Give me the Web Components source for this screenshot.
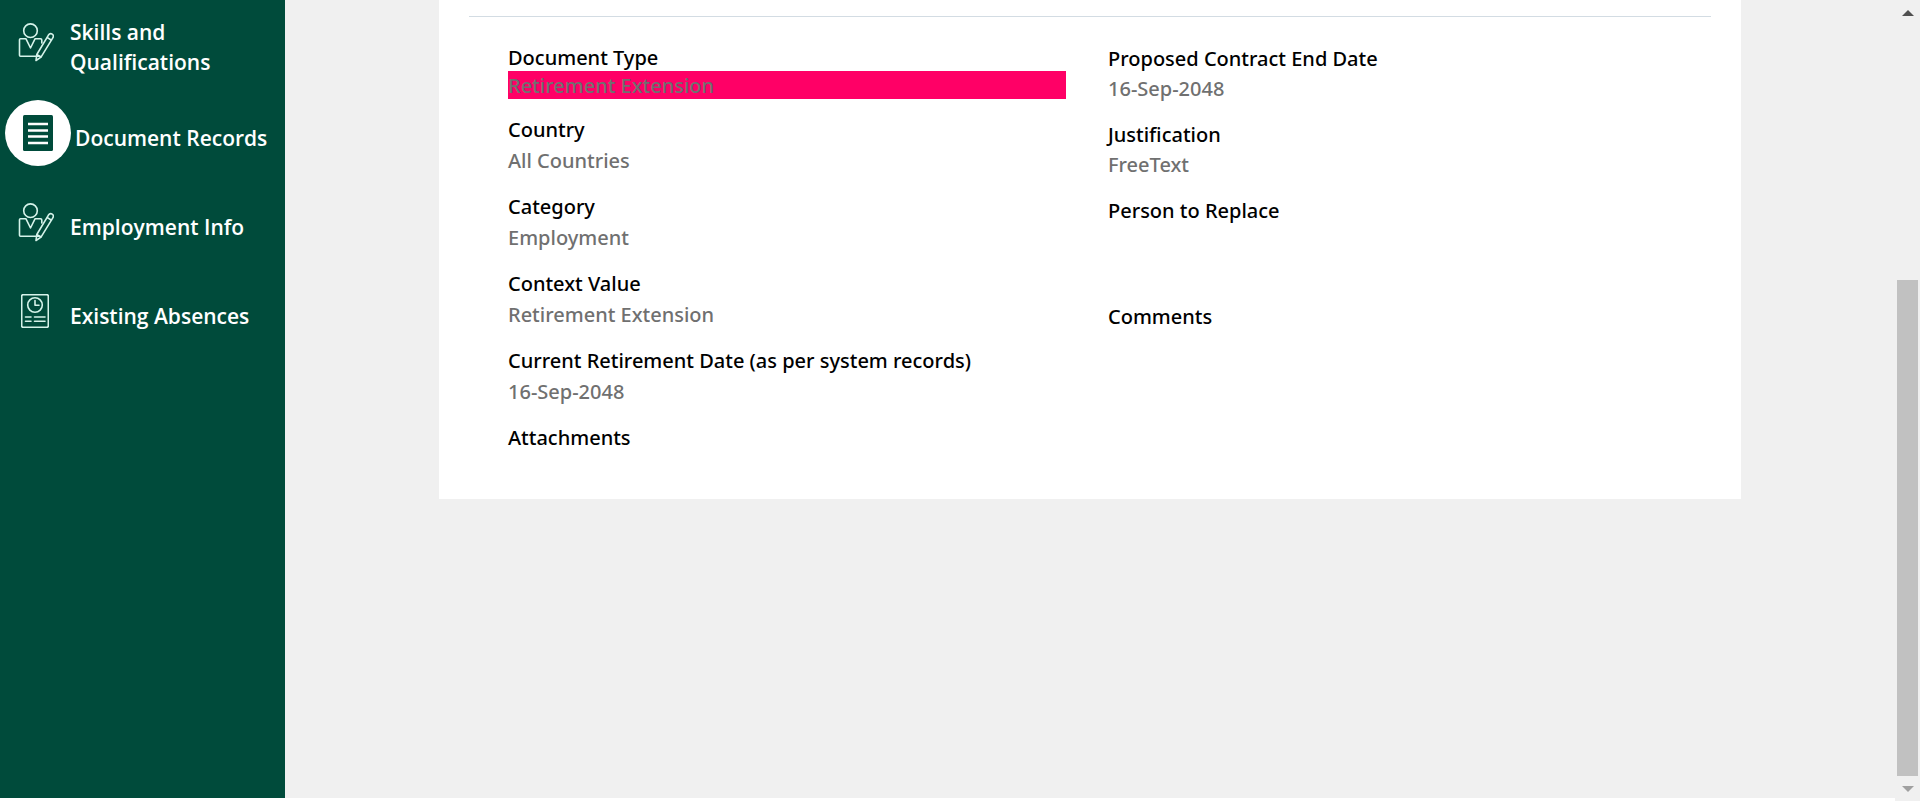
<!DOCTYPE html>
<html lang="en">
<head>
<meta charset="utf-8">
<title>Document Records</title>
<style>
html, body { margin: 0; height: 100%; background: #fff; }
body { font-family: "Noto Sans", "Open Sans", sans-serif; overflow: hidden; }
</style>
</head>
<body>
<hr-app></hr-app>

<template id="t-hr-app">
  <style>
    :host { display: flex; height: 100vh; }
    .page { flex: 1; display: flex; min-width: 0; margin-bottom: 3px; background: #f0f0f0; }
    main { flex: 1; min-width: 0; }
  </style>
  <div class="page">
    <side-nav>
      <nav-item icon="person">Skills and Qualifications</nav-item>
      <nav-item icon="document" active>Document Records</nav-item>
      <nav-item icon="person">Employment Info</nav-item>
      <nav-item icon="absence">Existing Absences</nav-item>
    </side-nav>
    <main>
      <record-card>
        <info-field slot="left" label="Document Type" highlight>Retirement Extension</info-field>
        <info-field slot="left" label="Country">All Countries</info-field>
        <info-field slot="left" label="Category">Employment</info-field>
        <info-field slot="left" label="Context Value">Retirement Extension</info-field>
        <info-field slot="left" label="Current Retirement Date (as per system records)">16-Sep-2048</info-field>
        <info-field slot="left" label="Attachments"></info-field>
        <info-field slot="right" label="Proposed Contract End Date">16-Sep-2048</info-field>
        <info-field slot="right" label="Justification">FreeText</info-field>
        <info-field slot="right" label="Person to Replace" tall></info-field>
        <info-field slot="right" label="Comments"></info-field>
      </record-card>
    </main>
  </div>
  <scroll-rail></scroll-rail>
</template>

<template id="t-side-nav">
  <style>
    :host { display: block; flex: none; width: 285px; background: #004b3b; }
    nav { display: flex; flex-direction: column; gap: 23px; padding-top: 7px; }
  </style>
  <nav aria-label="Main"><slot></slot></nav>
</template>

<template id="t-nav-item">
  <style>
    :host { display: block; }
    a { display: flex; align-items: center; min-height: 66px; color: #fff; text-decoration: none;
        font: 600 21px/30px "Open Sans", "Noto Sans", sans-serif; }
    .icon { flex: none; display: flex; align-items: center; justify-content: center; width: 70px; height: 66px; }
    .label { padding-top: 10px; }
    :host([active]) .icon { width: 66px; margin: 0 4px 0 5px; border-radius: 50%; background: #fff; }
    svg { display: block; fill: none; stroke: #d5f3ea; stroke-width: 1.6; stroke-linejoin: round; stroke-linecap: round; }
  </style>
  <a href="#"><span class="icon"></span><span class="label"><slot></slot></span></a>
</template>

<template id="t-record-card">
  <style>
    :host { display: block; box-sizing: border-box; max-width: 1302px; margin: 0 auto; padding: 16px 30px 46px; background: #fff; }
    hr { margin: 0; border: 0; height: 1px; background: #d3dce3; }
    .columns { display: grid; grid-template-columns: 1fr 1fr; column-gap: 42px; align-items: start; padding: 28px 45px 0 39px; }
    .column { display: grid; }
    .left { row-gap: 15px; }
    .right { row-gap: 16px; --label-line: 28px; }
  </style>
  <hr>
  <div class="columns">
    <div class="column left"><slot name="left"></slot></div>
    <div class="column right"><slot name="right"></slot></div>
  </div>
</template>

<template id="t-info-field">
  <style>
    :host { display: block; font-size: 20px; font-weight: 500; }
    dl, dd { margin: 0; }
    dt { color: #000; line-height: var(--label-line, 30px); }
    dd { color: #707070; line-height: 32px; }
    :host([highlight]) { padding-bottom: 1px; }
    :host([highlight]) dt { line-height: 26px; }
    :host([highlight]) dd { padding-top: 2px; line-height: 26px; background: #ff0066; }
    :host([tall]) dd { height: 62px; }
  </style>
  <dl><dt></dt><dd><slot></slot></dd></dl>
</template>

<template id="t-scroll-rail">
  <style>
    :host { display: flex; flex-direction: column; flex: none; width: 25px; background: #f0f0f0; }
    button { display: flex; justify-content: center; align-items: center; width: 21px; height: 25px; margin-left: 2px; padding: 0; border: 0; background: none; }
    .track { flex: 1; display: flex; flex-direction: column; padding-left: 2px; }
    .track::before { content: ""; flex: 255; }
    .thumb { flex: 496; width: 21px; background: #c1c1c1; }
  </style>
  <button type="button" aria-label="Scroll up"><svg width="12" height="6"><path d="M0 6L6 0L12 6Z" fill="#505050"/></svg></button>
  <div class="track"><div class="thumb"></div></div>
  <button type="button" aria-label="Scroll down"><svg width="12" height="6"><path d="M0 0L6 6L12 0Z" fill="#a0a0a0"/></svg></button>
</template>

<script>
const ICONS = {
  person: `<svg width="37" height="39" viewBox="17 22 37 39" aria-hidden="true">
    <circle cx="30.5" cy="29.7" r="6.8"/>
    <path d="M40 55.2H20.5a1 1 0 0 1-1-1V38.8a1 1 0 0 1 1-1H26L30.5 47L35 37.8H40.5q1.3 0 1.3 1.3V42"/>
    <path d="M36 59.5L36.8 53.5L48.3 34.3Q50 31.8 52.2 33.2Q54.2 34.6 52.8 36.9L41 56.2ZM36.8 53.5L41 56.2M47 36.4L51.5 39.2"/></svg>`,
  document: `<svg width="30" height="36" viewBox="0 0 30 36" aria-hidden="true">
    <rect width="30" height="36" rx="1.5" fill="#004b3b" stroke="none"/>
    <path d="M5 9H25M5 15.5H25M5 21.5H25M5 28H25" stroke="#fff" stroke-width="2.4" stroke-linecap="butt"/></svg>`,
  absence: `<svg width="28" height="34" viewBox="22 293 28 34" aria-hidden="true">
    <rect x="22.7" y="293.7" width="26.6" height="32.6" rx="1.5"/>
    <circle cx="36" cy="304" r="7.3"/><path d="M36 299.5V304.3H40"/>
    <path d="M26.5 316H32M35.5 316H46M26.5 320.3H32M35.5 320.3H46"/></svg>`
};

class TemplateElement extends HTMLElement {
  constructor() {
    super();
    this.attachShadow({ mode: "open" })
      .append(document.getElementById("t-" + this.localName).content.cloneNode(true));
  }
}
class InfoField extends TemplateElement {
  connectedCallback() {
    this.shadowRoot.querySelector("dt").textContent = this.getAttribute("label");
    if (!this.textContent && !this.hasAttribute("tall")) this.shadowRoot.querySelector("dd").hidden = true;
  }
}
class NavItem extends TemplateElement {
  connectedCallback() {
    this.shadowRoot.querySelector(".icon").innerHTML = ICONS[this.getAttribute("icon")];
    if (this.hasAttribute("active")) this.shadowRoot.querySelector("a").setAttribute("aria-current", "page");
  }
}
customElements.define("info-field", InfoField);
customElements.define("nav-item", NavItem);
customElements.define("side-nav", class extends TemplateElement {});
customElements.define("record-card", class extends TemplateElement {});
customElements.define("scroll-rail", class extends TemplateElement {});
customElements.define("hr-app", class extends TemplateElement {});
</script>
</body>
</html>
